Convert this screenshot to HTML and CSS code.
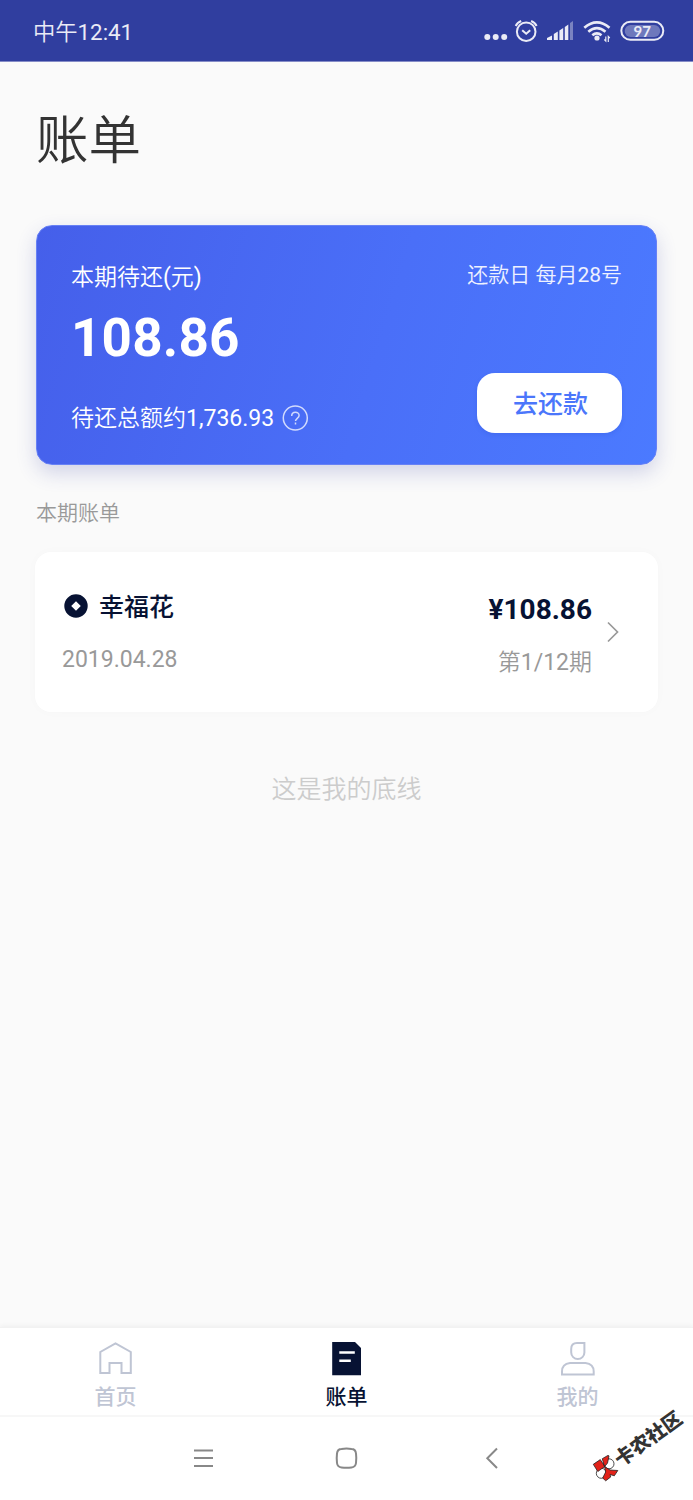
FILE: index.html
```
<!DOCTYPE html>
<html lang="zh-CN">
<head>
<meta charset="utf-8">
<title>账单</title>
<link rel="stylesheet" href="styles.css">
</head>
<body>
<div class="screen">
  <header class="status-bar">
    <span class="status-time">中午12:41</span>
    <svg class="status-icons" width="184" height="28" viewBox="482 17 184 28" fill="none">
      <g fill="#eaebf6">
        <circle cx="487.3" cy="37" r="3"/><circle cx="495.7" cy="37" r="3"/><circle cx="504.2" cy="37" r="3"/>
        <path d="M547 38l5-2.500v4.500H547zM553.800 34l4-2.500v8.500h-4zM559.400 30.500l3.800-2.500V40h-3.800zM564.800 27l3.500-2.500v15.500h-3.500z"/>
        <path d="M570 23l3-2v19h-3z" opacity=".4"/>
        <circle cx="597" cy="38" r="2.600"/>
      </g>
      <g stroke="#eaebf6" stroke-width="2">
        <circle cx="526.200" cy="31.700" r="9.300"/>
        <path d="M522.200 30.200l4 3.500 4-3.500M515.700 26q1.500-3.500 5.500-5M536.600 26q-1.500-3.500-5.500-5"/>
      </g>
      <g stroke="#eaebf6" stroke-width="2.700">
        <path d="M584.300 27.700q12.600-10.500 25.200 0M588.300 31.700q8.600-7 17.200 0M592.300 35.200q4.600-3.700 9.200 0"/>
      </g>
      <path d="M605.800 36.500v4.500l-1.500-1.500M608.300 42v-5.500l1.500 1.500" stroke="#eaebf6" stroke-width="1.200"/>
      <rect x="621.300" y="21.800" width="42" height="18" rx="9" stroke="#eaebf6" stroke-width="2"/>
      <rect x="624.700" y="25" width="35.500" height="12" rx="6" fill="#fff" opacity=".3"/>
      <text class="battery-level" x="642.300" y="36.500" text-anchor="middle" fill="#eaebf6">97</text>
    </svg>
  </header>

  <main class="content">
    <h1 class="page-title">账单</h1>

    <section class="due-card">
      <div class="due-summary">
        <div class="due-label">本期待还(元)</div>
        <div class="due-amount">108.86</div>
        <div class="due-total">
          <span>待还总额约1,736.93</span>
          <svg class="help-icon" width="27" height="27" viewBox="0 0 27 27" fill="none" stroke="#fff">
            <circle cx="13.300" cy="13" r="12" stroke-width="1.500" opacity=".75"/>
            <path d="M9.700 11c0-5 7.400-5 7.400-.5 0 2.600-3.600 3-3.600 5.500M13.500 17.600v1.900" stroke-width="1.500" opacity=".75"/>
          </svg>
        </div>
      </div>
      <div class="due-side">
        <div class="due-date">还款日 每月28号</div>
        <button class="pay-button" type="button">去还款</button>
      </div>
    </section>

    <h2 class="section-title">本期账单</h2>

    <article class="bill">
      <div class="bill-info">
        <div class="bill-name">
          <svg width="24" height="24" viewBox="0 0 24 24"><path fill="#071233" fill-rule="evenodd" d="M12 .3a11.700 11.700 0 1 0 0 23.400A11.700 11.700 0 0 0 12 .3zM12 7.200l4.800 4.800-4.800 4.800L7.200 12z"/></svg>
          <span>幸福花</span>
        </div>
        <div class="bill-date">2019.04.28</div>
      </div>
      <div class="bill-value">
        <div class="bill-amount">¥108.86</div>
        <div class="bill-period">第1/12期</div>
      </div>
      <svg class="chevron" width="14" height="22" viewBox="0 0 14 22" fill="none" stroke="#999" stroke-width="1.700"><path d="M2 1.500L11.500 11 2 20.500"/></svg>
    </article>

    <p class="end-note">这是我的底线</p>
  </main>

  <nav class="tab-bar">
    <a class="tab">
      <svg width="36" height="36" viewBox="0 0 36 36" fill="none" stroke="#bfc5d4" stroke-width="2"><path d="M17.500 2.300L32.800 11V32H23.500V22H11.500V32H2.300V11z"/></svg>
      <span>首页</span>
    </a>
    <a class="tab tab-active">
      <svg width="36" height="36" viewBox="0 0 36 36"><path fill="#071233" d="M3.200 1H26L32 7V34.300H3.200z"/><path d="M10.300 11.500H25.800M10.300 19.800H21.800" stroke="#fff" stroke-width="2.500"/></svg>
      <span>账单</span>
    </a>
    <a class="tab">
      <svg width="36" height="36" viewBox="0 0 36 36" fill="none" stroke="#bfc5d4" stroke-width="2"><path d="M17 2H24.400V11.500a6.600 6.600 0 0 1-13.200 0V8q0-6 5.800-6zM10 22h15.500q8.200 1 8.200 8.500v3H2v-3q0-7.500 8-8.500z"/></svg>
      <span>我的</span>
    </a>
  </nav>

  <footer class="system-nav">
    <svg width="24" height="24" viewBox="0 0 24 24" stroke="#888" stroke-width="2"><path d="M2 4.500h19M2 12h19M2 20h19"/></svg>
    <svg width="24" height="24" viewBox=".5 0 24 24" fill="none" stroke="#888" stroke-width="2"><path d="M7 3Q12 2.200 17 3q4 0 4.500 4.500.6 4.500 0 9.500-.5 4-4.500 4.500-5 .6-10 0-4-.5-4.500-4.500-.6-5 0-9.500Q3 3 7 3z"/></svg>
    <svg width="24" height="24" viewBox="0 0 24 24" fill="none" stroke="#888" stroke-width="2"><path d="M19 2.500L9.300 12.300l9.700 9.700"/></svg>
  </footer>

  <svg class="watermark" width="103" height="115" viewBox="590 1380 103 115">
    <g stroke="#222" stroke-width=".8">
      <circle cx="609" cy="1463.800" r="5" fill="#fff"/>
      <circle cx="601.300" cy="1473.300" r="5" fill="#fff"/>
      <path fill="#e12219" d="M593.300 1464.300L600.300 1459.600l4.500 6.900-7 5zM602.300 1458.700l5.700-3.300 1 .5-1.500 7.200-3 3.700z"/>
      <path fill="#e12219" d="M604.500 1466.500l5.500 3.500 7.800.5-3.500 5.300-4.300-1.300.7 2.500-5 3.800-3-2.800 3-6z"/>
    </g>
    <g class="watermark-text" transform="translate(624 1455.600) rotate(-36)">
      <text x="-9.500" y="7.500" fill="#333" textLength="78">卡农社区</text>
    </g>
  </svg>
</div>
</body>
</html>
```

FILE: styles.css
```
* { box-sizing: border-box; }

body {
  margin: 0;
  background: #fafafa;
  color: #071233;
  font-family: Roboto, "Noto Sans CJK SC DemiLight", "Noto Sans CJK SC", sans-serif;
}

.screen {
  position: relative;
  display: flex;
  flex-direction: column;
  width: 693px;
  height: 1500px;
  overflow: hidden;
}

.status-bar {
  display: flex;
  justify-content: space-between;
  align-items: flex-start;
  height: 62px;
  padding: 17px 27px 0 33px;
  background: #303e9f;
  border-bottom: 1px solid #858cc7;
  color: #eaebf6;
}
.status-time { font-size: 22.3px; line-height: 30px; }
.battery-level { font: bold 15px Lato, sans-serif; }

.content { flex: 1; padding: 0 36px; }

.page-title {
  margin: 38px 0 0;
  font-family: "Noto Sans CJK SC DemiLight", "Noto Sans CJK SC", sans-serif;
  font-size: 52.5px;
  font-weight: 400;
  line-height: 72px;
  color: #333;
}

.due-card {
  display: flex;
  justify-content: space-between;
  height: 240px;
  margin-top: 53px;
  padding: 35px 34px 0 34px;
  border: 1px solid #6781f5;
  border-radius: 16px;
  background: linear-gradient(107deg, #455fea, #4a6ff8 55%, #4b7aff) border-box;
  box-shadow: 0 8px 20px rgba(48, 62, 159, .2);
  color: #fff;
}
.due-summary, .due-side { display: flex; flex-direction: column; }
.due-side { align-items: flex-end; }
.due-label { font-size: 23px; line-height: 34px; }
.due-amount { margin-top: 11px; font-size: 53px; font-weight: 700; line-height: 64px; letter-spacing: .2px; }
.due-total {
  display: flex;
  align-items: center;
  gap: 8px;
  margin-top: 30px;
  font-size: 23px;
  line-height: 34px;
}
.due-total span { padding-top: 2px; }
.due-date { margin-top: -1px; font-size: 21px; line-height: 30px; color: #eef1ff; }
.pay-button {
  width: 145px;
  height: 60px;
  margin-top: 83px;
  padding: 2px 0 0 2px;
  border: 0;
  border-radius: 18px;
  background: #fff;
  box-shadow: 0 2px 4px rgba(30, 60, 180, .15);
  color: #4b76fb;
  font: 500 25px/60px Roboto, "Noto Sans CJK SC", sans-serif;
}

.section-title {
  margin: 33px 0 0;
  font-size: 21px;
  font-weight: 400;
  line-height: 30px;
  color: #999;
}

.bill {
  display: flex;
  height: 160px;
  margin: 24px -1px 0;
  padding: 36px 38px 0 27px;
  border-radius: 16px;
  background: #fff;
  box-shadow: 0 0 12px rgba(0, 0, 0, .018);
}
.bill-info { flex: 1; }
.bill-name {
  display: flex;
  align-items: center;
  gap: 11px;
  padding-left: 2px;
  font-family: Roboto, "Noto Sans CJK SC", sans-serif;
  font-size: 25px;
  font-weight: 500;
  line-height: 36px;
}
.bill-name span { padding-top: 4px; line-height: 32px; }
.bill-date { margin-top: 19px; font-size: 23px; line-height: 34px; color: #999; }
.bill-value { text-align: right; }
.bill-amount { margin-top: 3px; font-size: 28px; font-weight: 700; line-height: 38px; }
.bill-period { margin-top: 17px; font-size: 23px; line-height: 34px; color: #999; }
.chevron { margin: 33px 0 0 14px; }

.end-note {
  margin: 60px 0 0;
  text-align: center;
  font-size: 25px;
  line-height: 36px;
  color: #ccc;
}

.tab-bar {
  display: grid;
  grid-template-columns: repeat(3, 1fr);
  height: 90px;
  padding-top: 13px;
  border-top: 1px solid #f2f2f2;
  border-bottom: 2px solid #f7f7f7;
  background: #fff;
  box-shadow: 0 -1px 5px rgba(0, 0, 0, .05);
}
.tab {
  display: flex;
  flex-direction: column;
  align-items: center;
  gap: 5px;
  color: #bfc5d4;
  font-family: Roboto, "Noto Sans CJK SC", sans-serif;
  font-size: 21px;
  font-weight: 500;
  line-height: 30px;
}
.tab-active { color: #071233; }

.system-nav {
  display: flex;
  justify-content: center;
  gap: 119px;
  height: 83px;
  padding-top: 29px;
  background: #fff;
}

.watermark { position: absolute; right: 0; bottom: 5px; }
.watermark-text { font: 900 19.5px "Noto Sans CJK SC", sans-serif; }
```
